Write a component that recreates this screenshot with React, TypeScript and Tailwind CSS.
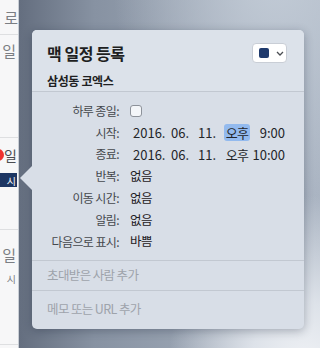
const rows = [
  { label: "반복:", value: "없음" },
  { label: "이동 시간:", value: "없음" },
  { label: "알림:", value: "없음" },
  { label: "다음으로 표시:", value: "바쁨" },
]

function DateValue({ time, active }: { time: string; active?: boolean }) {
  return (
    <div className="flex items-center pl-[3px] text-[13px] text-[#232529]">
      <span className="w-[38px]">2016.</span>
      <span className="w-[27px]">06.</span>
      <span className="w-[26px]">11.</span>
      <span
        className={
          active
            ? "flex h-[17px] w-[26px] items-center justify-center rounded-[3px] bg-[#93baee] tracking-[-0.05em]"
            : "flex h-[17px] w-[26px] items-center justify-center tracking-[-0.05em]"
        }
      >
        오후
      </span>
      <span className="w-[35px] text-right">{time}</span>
    </div>
  )
}

function LeftStrip() {
  return (
    <div className="flex w-[19px] shrink-0 flex-col overflow-hidden border-r border-[#c9ced5] bg-[#f7f7f8] text-[#7b7e83]">
      <div className="flex h-[35px] items-center justify-end border-b border-[#dedfe1] text-[15px] leading-none">로</div>
      <div className="flex h-[103px] flex-col items-end border-b border-[#dedfe1] pr-[2px] pt-[7px]">
        <span className="text-[15px] leading-[18px]">일</span>
      </div>
      <div className="flex h-[92px] flex-col border-b border-[#dedfe1] pt-[8px]">
        <div className="flex items-center justify-end pr-[1px]">
          <span className="h-[12px] w-[12px] shrink-0 rounded-full bg-[#f0322e]" />
          <span className="text-[14px] leading-[18px] text-[#4a4c50]">일</span>
        </div>
        <div className="mt-[9px] flex h-[14px] w-[17px] items-center justify-end bg-[#1d3663] pr-[1px] text-[10px] text-white">시</div>
      </div>
      <div className="flex h-[115px] flex-col items-end border-b border-[#dedfe1] pr-[2px] pt-[16px]">
        <span className="text-[15px] leading-[18px]">일</span>
        <span className="mt-[9px] text-[10px] leading-[12px]">시</span>
      </div>
    </div>
  )
}

export default function App() {
  return (
    <div className="flex h-[348px] w-[320px] overflow-hidden font-['Noto_Sans_CJK_KR',sans-serif]">
      <LeftStrip />
      <div className="flex-1 bg-[radial-gradient(ellipse_at_95%_108%,#f2f4f7_0%,#dde2e9_14%,transparent_34%),radial-gradient(ellipse_at_85%_-10%,#c3ccd7_0%,transparent_45%),linear-gradient(90deg,#646e7f_0%,#8792a2_25%,#a3adbb_75%,#aab4c2_100%)] pl-[13px] pt-[30px]">
        <div className="relative w-[272px] rounded-[5px] bg-[#d8dee7] shadow-[0_2px_10px_rgba(20,30,50,0.3)]">
          <svg className="absolute left-[-12px] top-[136px]" width="12" height="24" viewBox="0 0 12 24">
            <polygon points="12,0 0,12 12,24" fill="#d8dee7" />
          </svg>

          <div className="flex h-[62px] items-start justify-between rounded-t-[5px] border-b border-[#c2c8d1] bg-[#dce2ea] pl-[15px] pr-[17px] pt-[13px]">
            <div className="flex flex-col">
              <span className="text-[16px] font-bold leading-[20px] tracking-[-0.03em] text-[#1e1f22]">맥 일정 등록</span>
              <span className="mt-[9px] text-[12px] font-bold leading-[17px] tracking-[-0.03em] text-[#1e1f22]">삼성동 코엑스</span>
            </div>
            <button className="flex h-[20px] w-[35px] items-center gap-[7px] rounded-[4px] border border-[#c9ced6] bg-white pl-[6px]">
              <span className="h-[10px] w-[10px] rounded-[2px] bg-[#1f3a6d]" />
              <svg width="8" height="5" viewBox="0 0 8 5">
                <path d="M1 1 L4 4 L7 1" fill="none" stroke="#4a4d52" strokeWidth="1.3" />
              </svg>
            </button>
          </div>

          <div className="flex flex-col border-b border-[#c2c8d1] pb-[7px] pt-[8px]">
            <div className="flex h-[21.8px] items-center">
              <span className="w-[87px] text-right text-[12px] tracking-[-0.05em] text-[#45484d]">하루 종일:</span>
              <span className="ml-[11px] h-[12px] w-[12px] rounded-[3px] border border-[#8d929a] bg-[#f4f6f9]" />
            </div>
            <div className="flex h-[21.8px] items-center">
              <span className="w-[87px] text-right text-[12px] tracking-[-0.05em] text-[#45484d]">시작:</span>
              <div className="ml-[11px]">
                <DateValue time="9:00" active />
              </div>
            </div>
            <div className="flex h-[21.8px] items-center">
              <span className="w-[87px] text-right text-[12px] tracking-[-0.05em] text-[#45484d]">종료:</span>
              <div className="ml-[11px]">
                <DateValue time="10:00" />
              </div>
            </div>
            {rows.map((r) => (
              <div key={r.label} className="flex h-[21.8px] items-center">
                <span className="w-[87px] text-right text-[12px] tracking-[-0.05em] text-[#45484d]">{r.label}</span>
                <span className="ml-[11px] text-[12.5px] tracking-[-0.05em] text-[#1f2023]">{r.value}</span>
              </div>
            ))}
          </div>

          <div className="flex h-[30px] items-center border-b border-[#c2c8d1] pl-[15px] text-[12.5px] tracking-[-0.05em] text-[#9ea3ab]">
            초대받은 사람 추가
          </div>
          <div className="flex h-[38px] items-start pl-[15px] pt-[8px] text-[12.5px] leading-[20px] tracking-[-0.05em] text-[#9ea3ab]">
            메모 또는 URL 추가
          </div>
        </div>
      </div>
    </div>
  )
}
